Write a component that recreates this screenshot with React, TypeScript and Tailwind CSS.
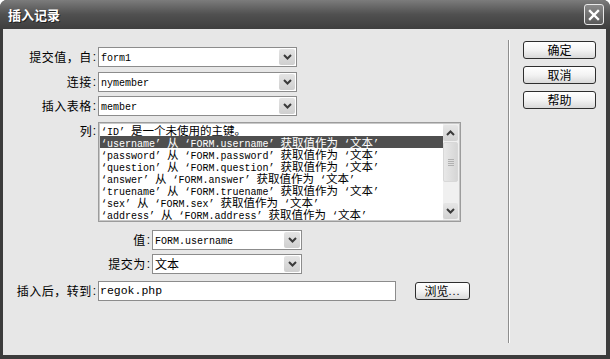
import React from 'react'

const CJK = /[\u4e00-\u9fff\u3000-\u303f\uff00-\uffef]/
const SPLIT = /([\u4e00-\u9fff\u3000-\u303f\uff00-\uffef]+)/

// split a line into CJK runs and latin runs, latin in a narrow mono face
const Mixed = ({ text, latin = 'text-[10px]', cjk = 'text-[12px]' }: { text: string; latin?: string; cjk?: string }) => (
  <>
    {text.split(SPLIT).map((p, i) =>
      p ? (
        <span
          key={i}
          className={
            CJK.test(p)
              ? `font-['Noto_Sans_CJK_SC',sans-serif] ${cjk}`
              : `font-['Liberation_Mono',monospace] ${latin}`
          }
        >
          {p}
        </span>
      ) : null
    )}
  </>
)

const Chevron = ({ up = false }: { up?: boolean }) => (
  <svg width="9" height="6" viewBox="0 0 9 6">
    <path
      d={up ? 'M1 5 L4.5 1.5 L8 5' : 'M1 1 L4.5 4.5 L8 1'}
      fill="none"
      stroke="#3a3a3a"
      strokeWidth="2"
    />
  </svg>
)

const Select = ({ value, w }: { value: string; w: string }) => (
  <div className={`${w} flex h-[20px] items-center border border-[#8c8c8c] bg-white pl-[2px] pr-[1px]`}>
    <div className="flex-1 whitespace-pre font-['Noto_Sans_CJK_SC',sans-serif] text-[12px] leading-[16px] text-black">
      <Mixed text={value} />
    </div>
    <div className="flex h-[16px] w-[16px] items-center justify-center rounded-[2px] bg-gradient-to-b from-[#e4e4e4] to-[#cfcfcf]">
      <Chevron />
    </div>
  </div>
)

const Label = ({ text, w }: { text: string; w: string }) => (
  <div className={`${w} flex shrink-0 items-center justify-end pr-[2px] text-black`}>
    <span className="font-['Noto_Sans_CJK_SC',sans-serif] text-[12px] tracking-[0.5px]">{text}</span>
    <span className="ml-[1px] font-['Liberation_Sans',sans-serif] text-[12px]">:</span>
  </div>
)

const XpButton = ({ children, w = 'w-[73px]' }: { children: React.ReactNode; w?: string }) => (
  <div
    className={`${w} flex h-[18px] items-center justify-center rounded-[3px] border border-[#2e2e2e] bg-gradient-to-b from-white via-[#f3f3f3] to-[#d9d9d9] font-['Noto_Sans_CJK_SC',sans-serif] text-[12px] leading-none text-black`}
  >
    {children}
  </div>
)

const rows = [
  '‘ID’ 是一个未使用的主键。',
  '‘username’ 从 ‘FORM.username’ 获取值作为 ‘文本’',
  '‘password’ 从 ‘FORM.password’ 获取值作为 ‘文本’',
  '‘question’ 从 ‘FORM.question’ 获取值作为 ‘文本’',
  '‘answer’ 从 ‘FORM.answer’ 获取值作为 ‘文本’',
  '‘truename’ 从 ‘FORM.truename’ 获取值作为 ‘文本’',
  '‘sex’ 从 ‘FORM.sex’ 获取值作为 ‘文本’',
  '‘address’ 从 ‘FORM.address’ 获取值作为 ‘文本’',
]

const App = () => {
  return (
    <div className="h-[359px] w-[610px] bg-white">
      <div className="flex h-full w-full flex-col overflow-hidden rounded-t-[7px] bg-[#3c3c3c]">
        {/* title bar */}
        <div className="flex h-[29px] shrink-0 items-center justify-between bg-gradient-to-b from-[#7c7c7c] via-[#505050] to-[#3e3e3e] pl-[8px] pr-[6px]">
          <span className="font-['Noto_Sans_CJK_SC',sans-serif] text-[13px] font-bold text-white [text-shadow:1px_1px_0_#222]">
            插入记录
          </span>
          <div className="flex h-[21px] w-[20px] items-center justify-center rounded-[3px] border border-[#e8e8e8] bg-gradient-to-b from-[#8a8a8a] to-[#5a5a5a]">
            <svg width="12" height="12" viewBox="0 0 12 12">
              <path d="M2 2 L10 10 M10 2 L2 10" stroke="#fff" strokeWidth="2.4" strokeLinecap="square" />
            </svg>
          </div>
        </div>

        {/* body */}
        <div className="mb-[4px] ml-[3px] mr-[4px] flex flex-1 bg-[#e7e7e7]">
          <div className="flex w-[505px] shrink-0 flex-col">
            <div className="mt-[18px] flex h-[20px]">
              <Label text="提交值，自" w="w-[95px]" />
              <Select value="form1" w="w-[199px]" />
            </div>
            <div className="mt-[5px] flex h-[20px]">
              <Label text="连接" w="w-[95px]" />
              <Select value="nymember" w="w-[199px]" />
            </div>
            <div className="mt-[4px] flex h-[20px]">
              <Label text="插入表格" w="w-[95px]" />
              <Select value="member" w="w-[199px]" />
            </div>

            <div className="mt-[6px] flex h-[100px]">
              <div className="flex h-[16px] w-[95px] items-center justify-end pr-[2px] pt-[2px]">
                <span className="font-['Noto_Sans_CJK_SC',sans-serif] text-[12px]">列</span>
                <span className="ml-[1px] font-['Liberation_Sans',sans-serif] text-[12px]">:</span>
              </div>
              <div className="w-[363px] border border-[#9c9c9c] bg-white">
                <div className="flex h-full border border-[#c8c8c8]">
                  <div className="flex flex-1 flex-col overflow-hidden">
                    {rows.map((r, i) => (
                      <div
                        key={i}
                        className={`h-[12px] shrink-0 whitespace-pre pl-[1px] font-['Noto_Sans_CJK_SC',sans-serif] text-[11.5px] leading-[12px] ${
                          i === 1 ? 'bg-[#4f4f4f] text-white' : 'text-black'
                        }`}
                      >
                        <Mixed text={r} cjk="text-[11.5px]" />
                      </div>
                    ))}
                  </div>
                  <div className="flex w-[16px] flex-col gap-[1px] bg-[#f0f0f0] py-[1px] pr-[1px]">
                    <div className="flex h-[16px] items-center justify-center rounded-[2px] bg-gradient-to-b from-[#e6e6e6] to-[#d2d2d2]">
                      <Chevron up />
                    </div>
                    <div className="flex h-[40px] items-center justify-center rounded-[2px] border border-[#d8d8d8] bg-gradient-to-r from-[#e8e8e8] to-[#d6d6d6]">
                      <div className="flex flex-col gap-[1px]">
                        <div className="h-[1px] w-[6px] bg-[#b0b0b0]" />
                        <div className="h-[1px] w-[6px] bg-[#b0b0b0]" />
                        <div className="h-[1px] w-[6px] bg-[#b0b0b0]" />
                        <div className="h-[1px] w-[6px] bg-[#b0b0b0]" />
                      </div>
                    </div>
                    <div className="flex-1" />
                    <div className="flex h-[16px] items-center justify-center rounded-[2px] bg-gradient-to-b from-[#e6e6e6] to-[#d2d2d2]">
                      <Chevron />
                    </div>
                  </div>
                </div>
              </div>
            </div>

            <div className="mt-[8px] flex h-[20px]">
              <Label text="值" w="w-[149px]" />
              <Select value="FORM.username" w="w-[150px]" />
            </div>
            <div className="mt-[4px] flex h-[20px]">
              <Label text="提交为" w="w-[149px]" />
              <Select value="文本" w="w-[150px]" />
            </div>

            <div className="mt-[7px] flex h-[20px] items-center">
              <Label text="插入后，转到" w="w-[95px]" />
              <div className="flex h-[20px] w-[298px] items-center border border-[#8c8c8c] bg-white pl-[1px]">
                <span className="font-['Liberation_Mono',monospace] text-[11.5px] text-black">regok.php</span>
              </div>
              <div className="ml-[19px]">
                <XpButton w="w-[55px]">
                  <span>浏览</span>
                  <span className="font-['Liberation_Sans',sans-serif] text-[11px] tracking-[1px]">...</span>
                </XpButton>
              </div>
            </div>
          </div>

          {/* etched separator */}
          <div className="mb-[12px] mt-[11px] flex">
            <div className="w-[1px] bg-[#8e8e8e]" />
            <div className="w-[1px] bg-white" />
          </div>

          <div className="ml-[13px] flex flex-col gap-[7px] pt-[12px]">
            <XpButton>确定</XpButton>
            <XpButton>取消</XpButton>
            <XpButton>帮助</XpButton>
          </div>
        </div>
      </div>
    </div>
  )
}

export default App
